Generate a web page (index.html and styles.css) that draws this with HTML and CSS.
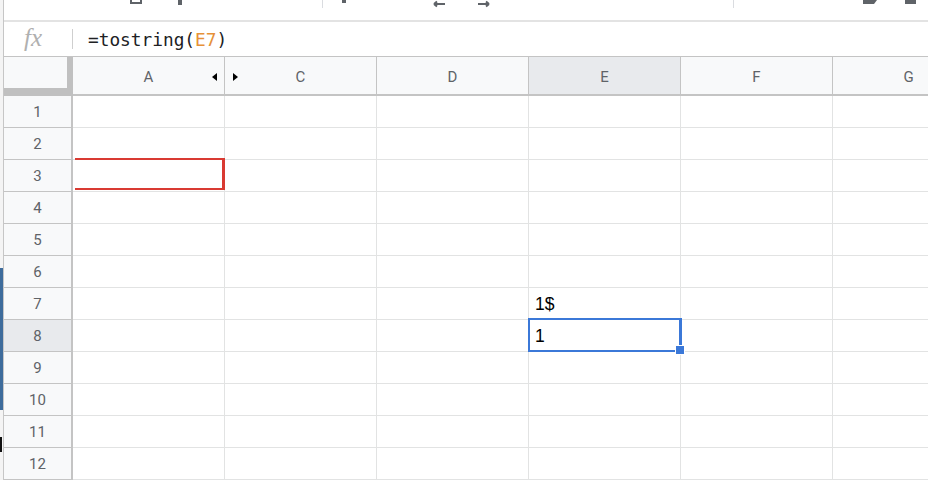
FILE: index.html
```html
<!DOCTYPE html>
<html lang="en">
<head>
  <meta charset="UTF-8">
  <title>Sheet</title>
  <link rel="stylesheet" href="styles.css">
</head>
<body>
  <div class="app">
    <div class="edge">
      <span class="edge-blue"></span>
      <span class="edge-black"></span>
    </div>

    <div class="main">
      <div class="toolbar">
        <svg width="924" height="20" viewBox="0 0 924 20">
          <rect x="127" y="-6" width="10" height="9" fill="none" stroke="#5f6368" stroke-width="2"/>
          <rect x="174" y="0" width="4" height="5" fill="#5f6368"/>
          <rect x="318" y="0" width="1" height="8" fill="#dadce0"/>
          <rect x="338" y="0" width="4" height="3" fill="#5f6368"/>
          <path d="M430 4 h11 M430 4 l3 -2.5 M430 4 l3 2.5" stroke="#5f6368" stroke-width="2" fill="none"/>
          <path d="M474 4 h11 M485 4 l-3 -2.5 M485 4 l-3 2.5" stroke="#5f6368" stroke-width="2" fill="none"/>
          <rect x="729" y="0" width="1" height="8" fill="#dadce0"/>
          <path d="M859 0 h14 l-3 4 h-11 z" fill="#5f6368"/>
          <rect x="901" y="0" width="11" height="4" fill="#5f6368"/>
        </svg>
      </div>

      <div class="formula-bar">
        <span class="fx">fx</span>
        <span class="fx-sep"></span>
        <span class="formula">=tostring(<span class="ref">E7</span>)</span>
      </div>

      <div class="sheet">
        <div class="corner"></div>
        <div class="col-head hidden-right">A</div>
        <div class="col-head hidden-left">C</div>
        <div class="col-head">D</div>
        <div class="col-head active">E</div>
        <div class="col-head">F</div>
        <div class="col-head">G</div>

        <div class="row-head">1</div>
        <div class="cell"></div><div class="cell"></div><div class="cell"></div><div class="cell"></div><div class="cell"></div><div class="cell"></div>

        <div class="row-head">2</div>
        <div class="cell"></div><div class="cell"></div><div class="cell"></div><div class="cell"></div><div class="cell"></div><div class="cell"></div>

        <div class="row-head">3</div>
        <div class="cell copy-range"></div><div class="cell"></div><div class="cell"></div><div class="cell"></div><div class="cell"></div><div class="cell"></div>

        <div class="row-head">4</div>
        <div class="cell"></div><div class="cell"></div><div class="cell"></div><div class="cell"></div><div class="cell"></div><div class="cell"></div>

        <div class="row-head">5</div>
        <div class="cell"></div><div class="cell"></div><div class="cell"></div><div class="cell"></div><div class="cell"></div><div class="cell"></div>

        <div class="row-head">6</div>
        <div class="cell"></div><div class="cell"></div><div class="cell"></div><div class="cell"></div><div class="cell"></div><div class="cell"></div>

        <div class="row-head">7</div>
        <div class="cell"></div><div class="cell"></div><div class="cell"></div><div class="cell">1$</div><div class="cell"></div><div class="cell"></div>

        <div class="row-head active">8</div>
        <div class="cell"></div><div class="cell"></div><div class="cell"></div><div class="cell selected">1</div><div class="cell"></div><div class="cell"></div>

        <div class="row-head">9</div>
        <div class="cell"></div><div class="cell"></div><div class="cell"></div><div class="cell"></div><div class="cell"></div><div class="cell"></div>

        <div class="row-head">10</div>
        <div class="cell"></div><div class="cell"></div><div class="cell"></div><div class="cell"></div><div class="cell"></div><div class="cell"></div>

        <div class="row-head">11</div>
        <div class="cell"></div><div class="cell"></div><div class="cell"></div><div class="cell"></div><div class="cell"></div><div class="cell"></div>

        <div class="row-head">12</div>
        <div class="cell"></div><div class="cell"></div><div class="cell"></div><div class="cell"></div><div class="cell"></div><div class="cell"></div>
      </div>
    </div>
  </div>
</body>
</html>
```

FILE: styles.css
```css
* {
  box-sizing: border-box;
}
body {
  margin: 0;
  background: #fff;
  font-family: Roboto, "Liberation Sans", sans-serif;
  overflow: hidden;
}
.app {
  display: flex;
  width: 928px;
  height: 480px;
  overflow: hidden;
}
.edge {
  width: 4px;
  flex: none;
  display: flex;
  flex-direction: column;
  background: #f4f4f4;
  border-right: 1px solid #c6c6c6;
  padding-top: 268px;
}
.edge-blue {
  display: block;
  height: 142px;
  background: #3e6c9c;
}
.edge-black {
  display: block;
  width: 2px;
  height: 15px;
  margin-top: 27px;
  background: #111;
}
.main {
  width: 924px;
  flex: none;
}
.toolbar {
  height: 22px;
  border-bottom: 2px solid #e3e3e3;
}
.toolbar svg {
  display: block;
}
.formula-bar {
  height: 35px;
  display: flex;
  align-items: center;
  border-bottom: 1px solid #c4c4c4;
  padding-left: 20px;
}
.fx {
  font-family: "Liberation Serif", serif;
  font-style: italic;
  font-size: 25px;
  color: #b0b0b0;
  width: 48px;
  margin-top: -2px;
}
.fx-sep {
  width: 1px;
  height: 20px;
  background: #cfcfcf;
  margin-right: 15px;
}
.formula {
  font-family: "DejaVu Sans Mono", "Liberation Mono", monospace;
  font-size: 17.8px;
  color: #202124;
}
.ref {
  color: #e69138;
}
.sheet {
  display: grid;
  grid-template-columns: 69px repeat(6, 152px);
  grid-template-rows: 39px repeat(12, 32px);
}
.corner {
  background: #f8f9fa;
  border-right: 6px solid #c0c0c0;
  border-bottom: 8px solid #c0c0c0;
}
.col-head {
  position: relative;
  display: flex;
  align-items: center;
  justify-content: center;
  padding-top: 3px;
  background: #f8f9fa;
  border-right: 1px solid #c4c4c4;
  border-bottom: 2px solid #c4c4c4;
  color: #5f6368;
  font-size: 15px;
}
.col-head.active {
  background: #e8eaed;
}
.hidden-right::after,
.hidden-left::before {
  content: "";
  position: absolute;
  top: 16px;
  border-top: 4.5px solid transparent;
  border-bottom: 4.5px solid transparent;
}
.hidden-right::after {
  right: 7px;
  border-right: 5px solid #000;
}
.hidden-left::before {
  left: 8px;
  border-left: 5px solid #000;
}
.row-head {
  display: flex;
  align-items: center;
  justify-content: center;
  background: #f8f9fa;
  border-right: 2px solid #c4c4c4;
  border-bottom: 1px solid #c4c4c4;
  color: #5f6368;
  font-size: 15px;
}
.row-head.active {
  background: #e8eaed;
}
.cell {
  position: relative;
  display: flex;
  align-items: flex-end;
  padding: 0 6px 4px;
  border-right: 1px solid #e2e3e3;
  border-bottom: 1px solid #e2e3e3;
  font-family: "Liberation Sans", Arial, sans-serif;
  font-size: 17.5px;
  color: #000;
}
.copy-range::after {
  content: "";
  position: absolute;
  top: -2px;
  left: 2px;
  right: -1px;
  bottom: 1px;
  border: 2px solid #d93a32;
  border-left: none;
  border-right-width: 3px;
}
.selected::after {
  content: "";
  position: absolute;
  top: -2px;
  left: -1px;
  right: -2px;
  bottom: -1px;
  border: 2px solid #3b78d8;
  border-right-width: 3px;
}
.selected::before {
  content: "";
  position: absolute;
  right: -5px;
  bottom: -4px;
  width: 8px;
  height: 8px;
  background: #3b78d8;
  border: 1px solid #fff;
  z-index: 1;
}
```
